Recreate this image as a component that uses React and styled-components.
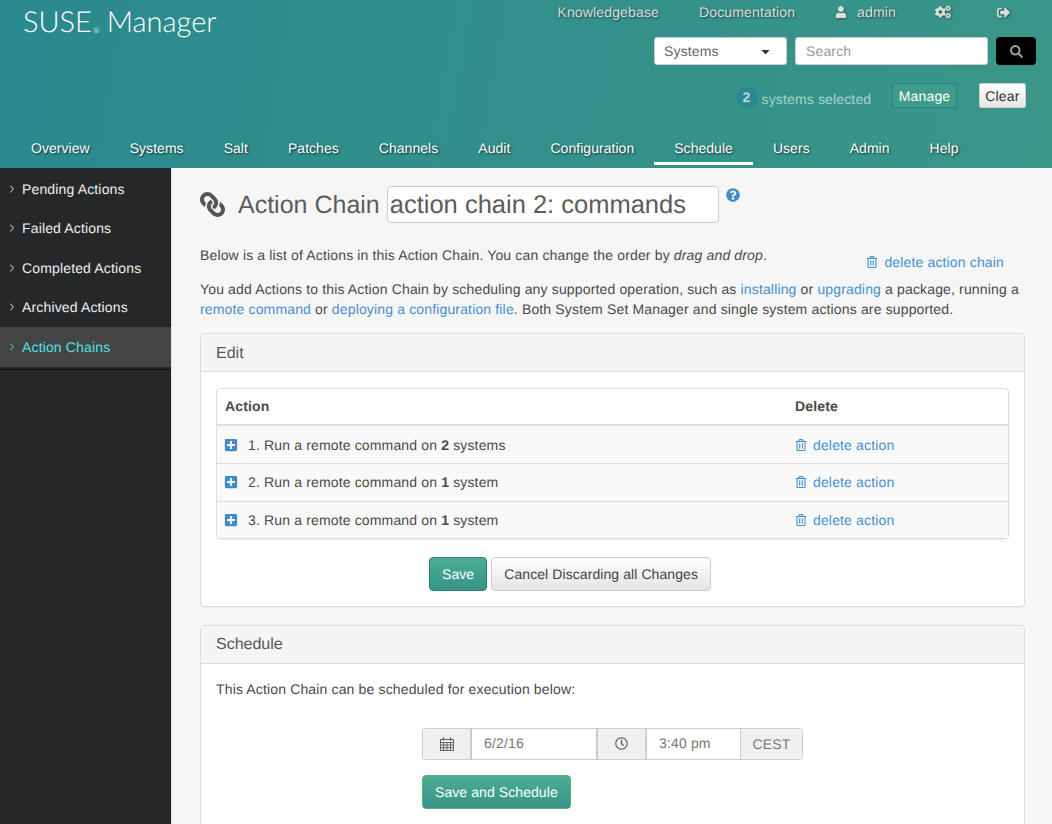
import React from "react";
import styled, { createGlobalStyle } from "styled-components";
import { FiChevronRight } from "react-icons/fi";
import {
  FaUser,
  FaCogs,
  FaSignOutAlt,
  FaSearch,
  FaCaretDown,
  FaLink,
  FaQuestionCircle,
  FaRegTrashAlt,
  FaPlusSquare,
  FaRegClock,
} from "react-icons/fa";

const GlobalStyle = createGlobalStyle`
  * { box-sizing: border-box; }
  html, body { margin: 0; padding: 0; height: 100%; overflow: hidden; }
  body {
    font-family: "Liberation Sans", Arial, sans-serif;
    font-size: 14px;
    line-height: 20px;
    letter-spacing: 0.15px;
    color: #4a4a4a;
    background: #f6f6f6;
    text-rendering: geometricPrecision;
  }
  a { color: #4790d0; text-decoration: none; }
  p { margin: 0; }
`;

const Page = styled.div`
  width: 1052px;
  height: 824px;
  display: flex;
  flex-direction: column;
  overflow: hidden;
`;

const Header = styled.header`
  height: 168px;
  flex: none;
  display: flex;
  flex-direction: column;
  background: linear-gradient(100deg, #2a898f 0%, #3a9687 100%);
`;

const HeaderTop = styled.div`
  height: 128px;
  padding: 0 16px 0 23px;
  display: flex;
  justify-content: space-between;
`;

const Logo = styled.div`
  font-family: "Lato", sans-serif;
  font-weight: 300;
  font-size: 29px;
  line-height: 30px;
  letter-spacing: 0;
  color: #fff;
  padding-top: 7px;
  white-space: nowrap;
  sup {
    font-size: 8px;
    line-height: 0;
    vertical-align: -1px;
    margin: 0 7px 0 1px;
  }
`;

const Tools = styled.div`
  display: flex;
  flex-direction: column;
  align-items: flex-end;
`;

const TopLinks = styled.div`
  height: 24px;
  display: flex;
  align-items: center;
  padding-right: 26px;
  color: #ddd;
  text-shadow: 1px 1px 2px rgba(0, 0, 0, 0.5);
  margin-bottom: 13px;
`;

const TopLink = styled.span`
  margin-left: ${(p) => p.$gap}px;
  display: inline-flex;
  align-items: center;
  gap: 10px;
  svg {
    font-size: ${(p) => p.$icon || 13}px;
    filter: drop-shadow(1px 1px 1px rgba(0, 0, 0, 0.4));
  }
`;

const SearchRow = styled.div`
  display: flex;
  gap: 8px;
  margin-bottom: 18px;
`;

const Field = styled.div`
  width: ${(p) => p.$w}px;
  height: 28px;
  background: #fff;
  border: 1px solid #ccc;
  border-radius: 3px;
  padding: 0 ${(p) => p.$pad || 9}px;
  display: flex;
  align-items: center;
  justify-content: space-between;
  color: ${(p) => p.$color};
  svg { color: #333; font-size: 13px; margin-right: 5px; }
`;

const SearchButton = styled.div`
  width: 40px;
  height: 28px;
  background: #000;
  border-radius: 4px;
  display: flex;
  align-items: center;
  justify-content: center;
  color: #999;
  font-size: 13px;
`;

const SelectedRow = styled.div`
  display: flex;
  align-items: flex-start;
  height: 26px;
  padding-right: 10px;
`;

const Count = styled.span`
  width: 22px;
  height: 22px;
  border-radius: 50%;
  background: #2b8a91;
  color: #b8dcd8;
  font-weight: 700;
  font-size: 14px;
  display: flex;
  align-items: center;
  justify-content: center;
  margin-top: 4px;
  padding-bottom: 2px;
`;

const SelectedText = styled.span`
  color: #a6d3cb;
  margin: 6px 21px 0 4px;
`;

const SmallButton = styled.span`
  height: 25px;
  padding: 0 5.5px;
  border-radius: 2px;
  display: flex;
  align-items: center;
  margin-left: ${(p) => p.$gap || 0}px;
  border: 1px solid ${(p) => (p.$green ? "#2b8086" : "#ccc")};
  color: ${(p) => (p.$green ? "#fff" : "#333")};
  background: ${(p) =>
    p.$green ? "#3f9c8c" : "linear-gradient(#fff, #e6e6e6)"};
`;

const Nav = styled.nav`
  height: 40px;
  padding-left: 11px;
  display: flex;
  letter-spacing: 0.04px;
`;

const NavItem = styled.a`
  height: 37px;
  padding: 5px 20px 0;
  display: flex;
  align-items: center;
  color: #fff;
  text-shadow: 1px 1px 2px rgba(0, 0, 0, 0.7);
  border-bottom: 3px solid ${(p) => (p.$active ? "#fff" : "transparent")};
`;

const Body = styled.div`
  flex: 1;
  display: flex;
  min-height: 0;
`;

const Sidebar = styled.aside`
  width: 172px;
  flex: none;
  background: #262729;
  border-right: 1px solid #e4e4e4;
  padding-top: 1px;
`;

const SideList = styled.ul`
  list-style: none;
  margin: 0;
  padding: 0 0 2px;
  border-bottom: 1px solid #111;
`;

const SideItem = styled.li`
  height: 39.5px;
  padding: 0 0 0.5px 6px;
  display: flex;
  align-items: center;
  gap: 4px;
  color: ${(p) => (p.$active ? "#4fe3e8" : "#eee")};
  background: ${(p) => (p.$active ? "#444" : "transparent")};
  svg { font-size: 12px; flex: none; }
`;

const Main = styled.main`
  flex: 1;
  padding: 18px 27px 0 28px;
  min-width: 0;
`;

const TitleRow = styled.div`
  display: flex;
  align-items: flex-start;
  height: 37px;
  margin-bottom: 22px;
`;

const TitleIcon = styled(FaLink)`
  font-size: 25px;
  color: #555;
  margin: 6px 13px 0 0;
  transform: scaleX(-1);
`;

const TitleText = styled.h1`
  margin: 0 7px 0 0;
  font-size: 25px;
  font-weight: 400;
  line-height: 39px;
  letter-spacing: 0;
  color: #5c5c5c;
  white-space: nowrap;
`;

const TitleInput = styled.div`
  width: 332px;
  height: 37px;
  background: #fff;
  border: 1px solid #ccc;
  border-radius: 4px;
  padding-left: 2px;
  font-size: 25.5px;
  line-height: 37px;
  letter-spacing: 0;
  color: #5c5c5c;
`;

const HelpIcon = styled(FaQuestionCircle)`
  color: #428bca;
  font-size: 14px;
  margin: 2px 0 0 7px;
`;

const Intro = styled.p`
  margin-bottom: ${(p) => p.$after}px;
  em { font-style: italic; }
`;

const DeleteChain = styled.a`
  float: right;
  margin: 7px 21px 0 0;
  display: inline-flex;
  align-items: center;
  gap: 6px;
  svg { font-size: 12px; }
`;

const Panel = styled.section`
  background: #fff;
  border: 1px solid #ddd;
  border-radius: 4px;
  box-shadow: 0 1px 1px rgba(0, 0, 0, 0.05);
  margin-bottom: 18px;
`;

const PanelHead = styled.div`
  height: 38px;
  padding: 2px 15px 0;
  display: flex;
  align-items: center;
  background: #f5f5f5;
  border-bottom: 1px solid #ddd;
  border-radius: 3px 3px 0 0;
  font-size: 16px;
  letter-spacing: 0;
  color: #555;
`;

const PanelBody = styled.div`
  padding: 16px 15px 15px;
`;

const Table = styled.div`
  border: 1px solid #ddd;
  border-radius: 4px;
  box-shadow: 0 1px 2px rgba(0, 0, 0, 0.08);
`;

const HeadRow = styled.div`
  height: 37px;
  display: grid;
  grid-template-columns: 570px 1fr;
  align-items: center;
  padding: 0 0 2px 8px;
  font-weight: 700;
  border-bottom: 2px solid #ddd;
`;

const Row = styled.div`
  height: 37.3px;
  display: grid;
  grid-template-columns: 570px 1fr;
  align-items: center;
  padding-left: 8px;
  background: #f9f9f9;
  border-top: ${(p) => (p.$first ? "none" : "1px solid #ddd")};
`;

const ActionCell = styled.div`
  display: flex;
  align-items: center;
  gap: 10px;
  svg { color: #428bca; font-size: 14px; margin-left: -1px; }
`;

const DeleteLink = styled.a`
  display: inline-flex;
  align-items: center;
  gap: 6px;
  svg { font-size: 12px; }
`;

const Actions = styled.div`
  display: flex;
  justify-content: center;
  gap: 4px;
  margin-top: 18px;
  padding-right: 85px;
`;

const Button = styled.span`
  height: 34px;
  padding: 0 12px;
  border-radius: 4px;
  display: inline-flex;
  align-items: center;
  letter-spacing: 0.08px;
  border: 1px solid ${(p) => p.$border || "#ccc"};
  color: ${(p) => (p.$primary ? "#fff" : "#444")};
  background: ${(p) =>
    p.$primary ? "linear-gradient(#4cad96, #379485)" : "linear-gradient(#fff, #e4e4e4)"};
`;

const ScheduleText = styled.p`
  margin: -1px 0 29px;
`;

const ScheduleForm = styled.div`
  margin-left: 206px;
  padding-bottom: 20px;
`;

const InputGroup = styled.div`
  display: flex;
  width: 381px;
  height: 32px;
  margin-bottom: 15px;
  border: 1px solid #ccc;
  border-radius: 4px;
  overflow: hidden;
`;

const Addon = styled.div`
  width: ${(p) => p.$w}px;
  background: #f0f0f0;
  display: flex;
  align-items: center;
  justify-content: center;
  color: #777;
  border-left: ${(p) => p.$left || 0}px solid #ccc;
  border-right: ${(p) => p.$right || 0}px solid #ccc;
  svg { font-size: 13px; color: #666; }
`;

const DateInput = styled.div`
  width: ${(p) => p.$w}px;
  background: #fff;
  padding: 0 12px 1px;
  display: flex;
  align-items: center;
  color: #777;
`;

// FontAwesome 4 style calendar: outline with a grid and two rings
const CalendarIcon = () => (
  <svg width="14" height="14" viewBox="0 0 14 14" fill="none" stroke="currentColor" strokeWidth="1">
    <rect x="0.5" y="2.5" width="13" height="11" />
    <path d="M0.5 5.5h13M0.5 8h13M0.5 10.7h13M3.5 5.5v8M7 5.5v8M10.5 5.5v8" />
    <path d="M3.5 0.5v3M10.5 0.5v3" strokeWidth="1.6" />
  </svg>
);

const App = () => {
  const nav = ["Overview", "Systems", "Salt", "Patches", "Channels", "Audit", "Configuration", "Schedule", "Users", "Admin", "Help"];
  const side = ["Pending Actions", "Failed Actions", "Completed Actions", "Archived Actions", "Action Chains"];
  const rows = [
    { n: 1, count: 2, label: "systems" },
    { n: 2, count: 1, label: "system" },
    { n: 3, count: 1, label: "system" },
  ];

  return (
    <Page>
      <GlobalStyle />
      <Header>
        <HeaderTop>
          <Logo>
            SUSE<sup>®</sup>Manager
          </Logo>
          <Tools>
            <TopLinks>
              <TopLink $gap={0}>Knowledgebase</TopLink>
              <TopLink $gap={40}>Documentation</TopLink>
              <TopLink $gap={40}>
                <FaUser size={12} />
                admin
              </TopLink>
              <TopLink $gap={39} $icon={16}>
                <FaCogs />
              </TopLink>
              <TopLink $gap={46}>
                <FaSignOutAlt />
              </TopLink>
            </TopLinks>
            <SearchRow>
              <Field $w={133} $color="#666">
                Systems
                <FaCaretDown />
              </Field>
              <Field $w={193} $pad={10} $color="#999">
                Search
              </Field>
              <SearchButton>
                <FaSearch />
              </SearchButton>
            </SearchRow>
            <SelectedRow>
              <Count>2</Count>
              <SelectedText>systems selected</SelectedText>
              <SmallButton $green>Manage</SmallButton>
              <SmallButton $gap={22}>Clear</SmallButton>
            </SelectedRow>
          </Tools>
        </HeaderTop>
        <Nav>
          {nav.map((item) => (
            <NavItem key={item} $active={item === "Schedule"}>
              {item}
            </NavItem>
          ))}
        </Nav>
      </Header>
      <Body>
        <Sidebar>
          <SideList>
            {side.map((item) => (
              <SideItem key={item} $active={item === "Action Chains"}>
                <FiChevronRight />
                {item}
              </SideItem>
            ))}
          </SideList>
        </Sidebar>
        <Main>
          <TitleRow>
            <TitleIcon />
            <TitleText>Action Chain</TitleText>
            <TitleInput>action chain 2: commands</TitleInput>
            <HelpIcon />
          </TitleRow>
          <DeleteChain>
            <FaRegTrashAlt />
            delete action chain
          </DeleteChain>
          <Intro $after={14}>
            Below is a list of Actions in this Action Chain. You can change the order by <em>drag and drop</em>.
          </Intro>
          <Intro $after={14}>
            You add Actions to this Action Chain by scheduling any supported operation, such as <a>installing</a> or{" "}
            <a>upgrading</a> a package, running a <a>remote command</a> or <a>deploying a configuration file</a>. Both
            System Set Manager and single system actions are supported.
          </Intro>
          <Panel>
            <PanelHead>Edit</PanelHead>
            <PanelBody>
              <Table>
                <HeadRow>
                  <span>Action</span>
                  <span>Delete</span>
                </HeadRow>
                {rows.map((row, i) => (
                  <Row key={row.n} $first={i === 0}>
                    <ActionCell>
                      <FaPlusSquare />
                      <span>
                        {row.n}. Run a remote command on <b>{row.count}</b> {row.label}
                      </span>
                    </ActionCell>
                    <DeleteLink>
                      <FaRegTrashAlt />
                      delete action
                    </DeleteLink>
                  </Row>
                ))}
              </Table>
              <Actions>
                <Button $primary $border="#2b8086">
                  Save
                </Button>
                <Button>Cancel Discarding all Changes</Button>
              </Actions>
            </PanelBody>
          </Panel>
          <Panel>
            <PanelHead>Schedule</PanelHead>
            <PanelBody>
              <ScheduleText>This Action Chain can be scheduled for execution below:</ScheduleText>
              <ScheduleForm>
                <InputGroup>
                  <Addon $w={49} $right={2}>
                    <CalendarIcon />
                  </Addon>
                  <DateInput $w={124}>6/2/16</DateInput>
                  <Addon $w={51} $left={2} $right={2}>
                    <FaRegClock />
                  </Addon>
                  <DateInput $w={93}>3:40 pm</DateInput>
                  <Addon $w={62} $left={1}>
                    CEST
                  </Addon>
                </InputGroup>
                <Button $primary $border="#4cb56f">
                  Save and Schedule
                </Button>
              </ScheduleForm>
            </PanelBody>
          </Panel>
        </Main>
      </Body>
    </Page>
  );
};

export default App;
